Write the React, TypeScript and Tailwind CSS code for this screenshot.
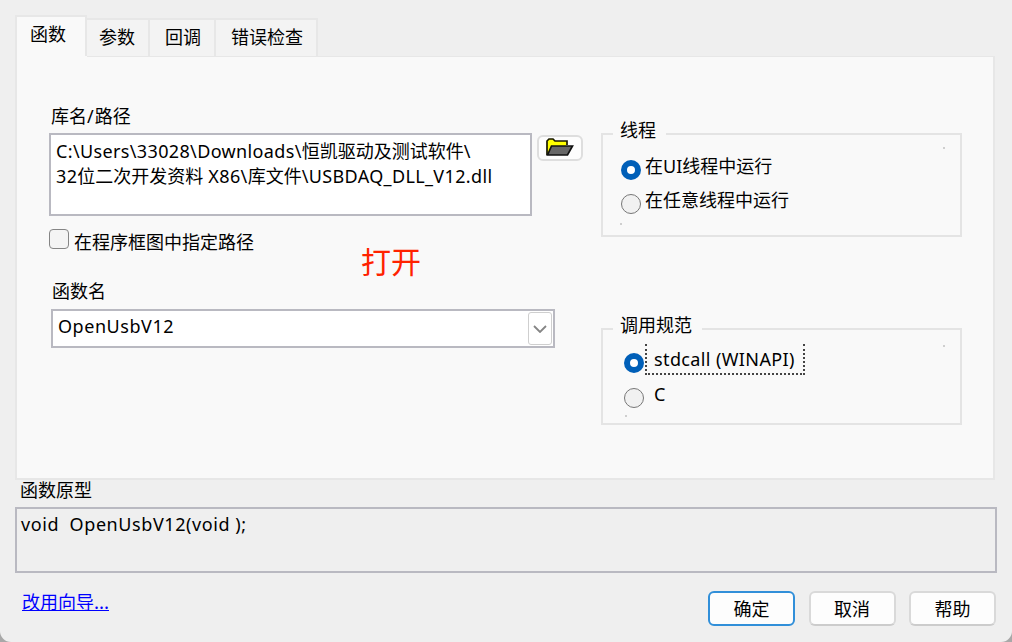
import type { ReactNode } from "react";

function Radio({ checked, className }: { checked?: boolean; className: string }) {
  return (
    <span
      role="radio"
      aria-checked={!!checked}
      className={`box-border block size-5 shrink-0 rounded-full ${
        checked ? "border-[6px] border-[#005fb8] bg-white" : "border-[1.5px] border-[#777777] bg-[#f1f1f1]"
      } ${className}`}
    />
  );
}

function Latin({ children }: { children: ReactNode }) {
  return <span className="font-['Noto_Sans'] tracking-[0.36px]">{children}</span>;
}

function Tab({ children, className }: { children: ReactNode; className: string }) {
  return (
    <div
      className={`h-[38px] border-t-2 border-r-2 border-[#e7e7e7] bg-[#f3f3f3] pt-[3px] leading-[26px] ${className}`}
    >
      {children}
    </div>
  );
}

function Group({ legend, className, children }: { legend: string; className: string; children: ReactNode }) {
  return (
    <section className={`relative w-[361px] border-2 border-[#e4e4e4] ${className}`}>
      <div className="absolute -top-[19px] left-[10px] bg-[#f9f9f9] pr-[10px] pl-[7px] leading-[26px]">{legend}</div>
      {children}
    </section>
  );
}

function DialogButton({ children, primary }: { children: ReactNode; primary?: boolean }) {
  return (
    <button
      className={`h-[35px] w-[87px] rounded-[6px] bg-[#fdfdfd] leading-[29px] ${
        primary ? "border-2 border-[#318fd9]" : "border-2 border-[#d9d9d9] border-b-[#cccccc]"
      }`}
    >
      {children}
    </button>
  );
}

export default function App() {
  return (
    <div className="h-[642px] w-[1012px] overflow-hidden bg-[#a8a8a8] font-['Noto_Sans_CJK_SC',sans-serif] text-[18px] text-black">
      <main className="h-[642px] rounded-b-[11px] bg-[#efefef] pt-[15px] pl-[15px]">
        <nav className="flex h-[41px] items-end">
          <div className="h-[41px] w-[72px] border-2 border-b-0 border-[#e7e7e7] bg-[#f9f9f9] pt-[3px] pl-[13px] leading-[26px]">
            函数
          </div>
          <Tab className="w-[63px] pl-3">参数</Tab>
          <Tab className="w-[66px] pl-[15px]">回调</Tab>
          <Tab className="w-[102px] pl-[15px]">错误检查</Tab>
        </nav>

        <div className="flex h-[424px] w-[980px] border-2 border-t-0 border-[#e7e7e7] bg-[#f9f9f9]">
          <div className="relative h-full w-[584px] pl-8">
            <div className="absolute top-0 left-[70px] h-[1px] w-[906px] bg-[#e7e7e7]" />
            <div className="pt-[46px] pl-[2px] leading-[26px]">
              库名<span className="pr-px font-['Noto_Sans']">/</span>路径
            </div>
            <div className="mt-[4px] flex items-start">
              <div className="h-[83px] w-[483px] border-2 border-[#b9b9c1] bg-white pt-[3px] pl-[5px] leading-[25px] whitespace-nowrap">
                <div className="h-[25px]">
                  <Latin>C:\Users\33028\Downloads\</Latin>恒凯驱动及测试软件<Latin>\</Latin>
                </div>
                <div className="h-[25px]">
                  <Latin>32</Latin>位二次开发资料<Latin> X86\</Latin>库文件<Latin>\USBDAQ_DLL_V12.dll</Latin>
                </div>
              </div>
              <button className="mt-[2px] ml-[5px] flex h-[26px] w-[46px] justify-center rounded-[6px] border-2 border-[#dedede] bg-[#fdfdfd]">
                <svg className="h-[20px] w-[28px]" viewBox="0 0 28 20">
                  <path d="M1 18V4L3 2H7L9 4H21V8" fill="#ffff00" stroke="#171700" strokeWidth="1.7" />
                  <path d="M1.5 18L5.5 9H26.5L21.5 18Z" fill="#666" stroke="#111" strokeWidth="1.7" />
                </svg>
              </button>
            </div>
            <div className="mt-[12px] flex h-[27px]">
              <span className="mt-[1px] box-border size-5 rounded-[4px] border-[1.5px] border-[#858585] bg-[#f4f4f4]" />
              <span className="ml-[5px] leading-[26px]">在程序框图中指定路径</span>
            </div>
            <div className="mt-[22px] pl-[3px] leading-[26px]">函数名</div>
            <div className="mt-[6px] ml-[2px] flex h-[39px] w-[504px] items-center justify-between border-2 border-[#b9b9c1] bg-white pr-px pl-[5px]">
              <span className="-mt-[4px] font-['Noto_Sans'] tracking-[0.55px]">OpenUsbV12</span>
              <span className="flex h-[33px] w-[24px] items-center justify-center rounded-[3px] border-[1.5px] border-[#cfcfcf]">
                <svg className="h-[8px] w-[14px]" viewBox="0 0 14 8">
                  <path d="M1 1L7 7L13 1" fill="none" stroke="#858585" strokeWidth="1.8" />
                </svg>
              </span>
            </div>
            <div className="absolute top-[184px] left-[344px] text-[30px] leading-[40px] text-[#ff2200]">打开</div>
          </div>

          <div className="pt-[77px]">
            <Group legend="线程" className="h-[104px]">
              <i className="absolute top-[12px] right-[15px] size-[2px] bg-[#cfcfcf]" />
              <div className="flex h-[35px] pt-[25px] pl-[18px]">
                <Radio checked className="" />
                <span className="-mt-[8px] ml-[4px] leading-[26px] whitespace-nowrap">
                  在<span className="font-['Noto_Sans']">UI</span>线程中运行
                </span>
              </div>
              <div className="flex pt-[24px] pl-[18px]">
                <Radio className="" />
                <span className="-mt-[8px] ml-[4px] leading-[26px]">在任意线程中运行</span>
              </div>
              <i className="absolute bottom-[10px] left-[17px] size-[2px] bg-[#cfcfcf]" />
            </Group>
            <Group legend="调用规范" className="mt-[91px] h-[97px]">
              <i className="absolute top-[15px] right-[15px] size-[2px] bg-[#cfcfcf]" />
              <div className="flex h-[45px] pt-[14px] pl-[21px]">
                <Radio checked className="mt-[9px]" />
                <span className="ml-px h-[31px] w-[160px] shrink-0 border-2 border-t-0 border-dotted border-[#444] pl-[7px] font-['Noto_Sans'] leading-[31px] tracking-[0.38px] whitespace-nowrap">
                  stdcall (WINAPI)
                </span>
              </div>
              <div className="flex pt-[13px] pl-[21px]">
                <Radio className="" />
                <span className="-mt-[7px] ml-[10px] font-['Noto_Sans'] leading-[26px]">C</span>
              </div>
              <i className="absolute bottom-[6px] left-[22px] size-[2px] bg-[#cfcfcf]" />
            </Group>
          </div>
        </div>

        <div className="h-[27px] pl-[5px] leading-[18px]">函数原型</div>
        <div className="h-[66px] w-[982px] border-2 border-[#b9b9c1] pt-[2px] pl-[4px] font-['Noto_Sans'] leading-[26px] tracking-[0.58px] whitespace-pre">
          {"void  OpenUsbV12(void );"}
        </div>
        <footer className="flex w-[981px] justify-between pt-[18px]">
          <a className="-mt-[3px] ml-[7px] h-[26px] leading-[26px] text-[#0000ff] underline underline-offset-1">
            改用向导...
          </a>
          <div className="flex gap-[13.5px]">
            <DialogButton primary>确定</DialogButton>
            <DialogButton>取消</DialogButton>
            <DialogButton>帮助</DialogButton>
          </div>
        </footer>
      </main>
    </div>
  );
}
